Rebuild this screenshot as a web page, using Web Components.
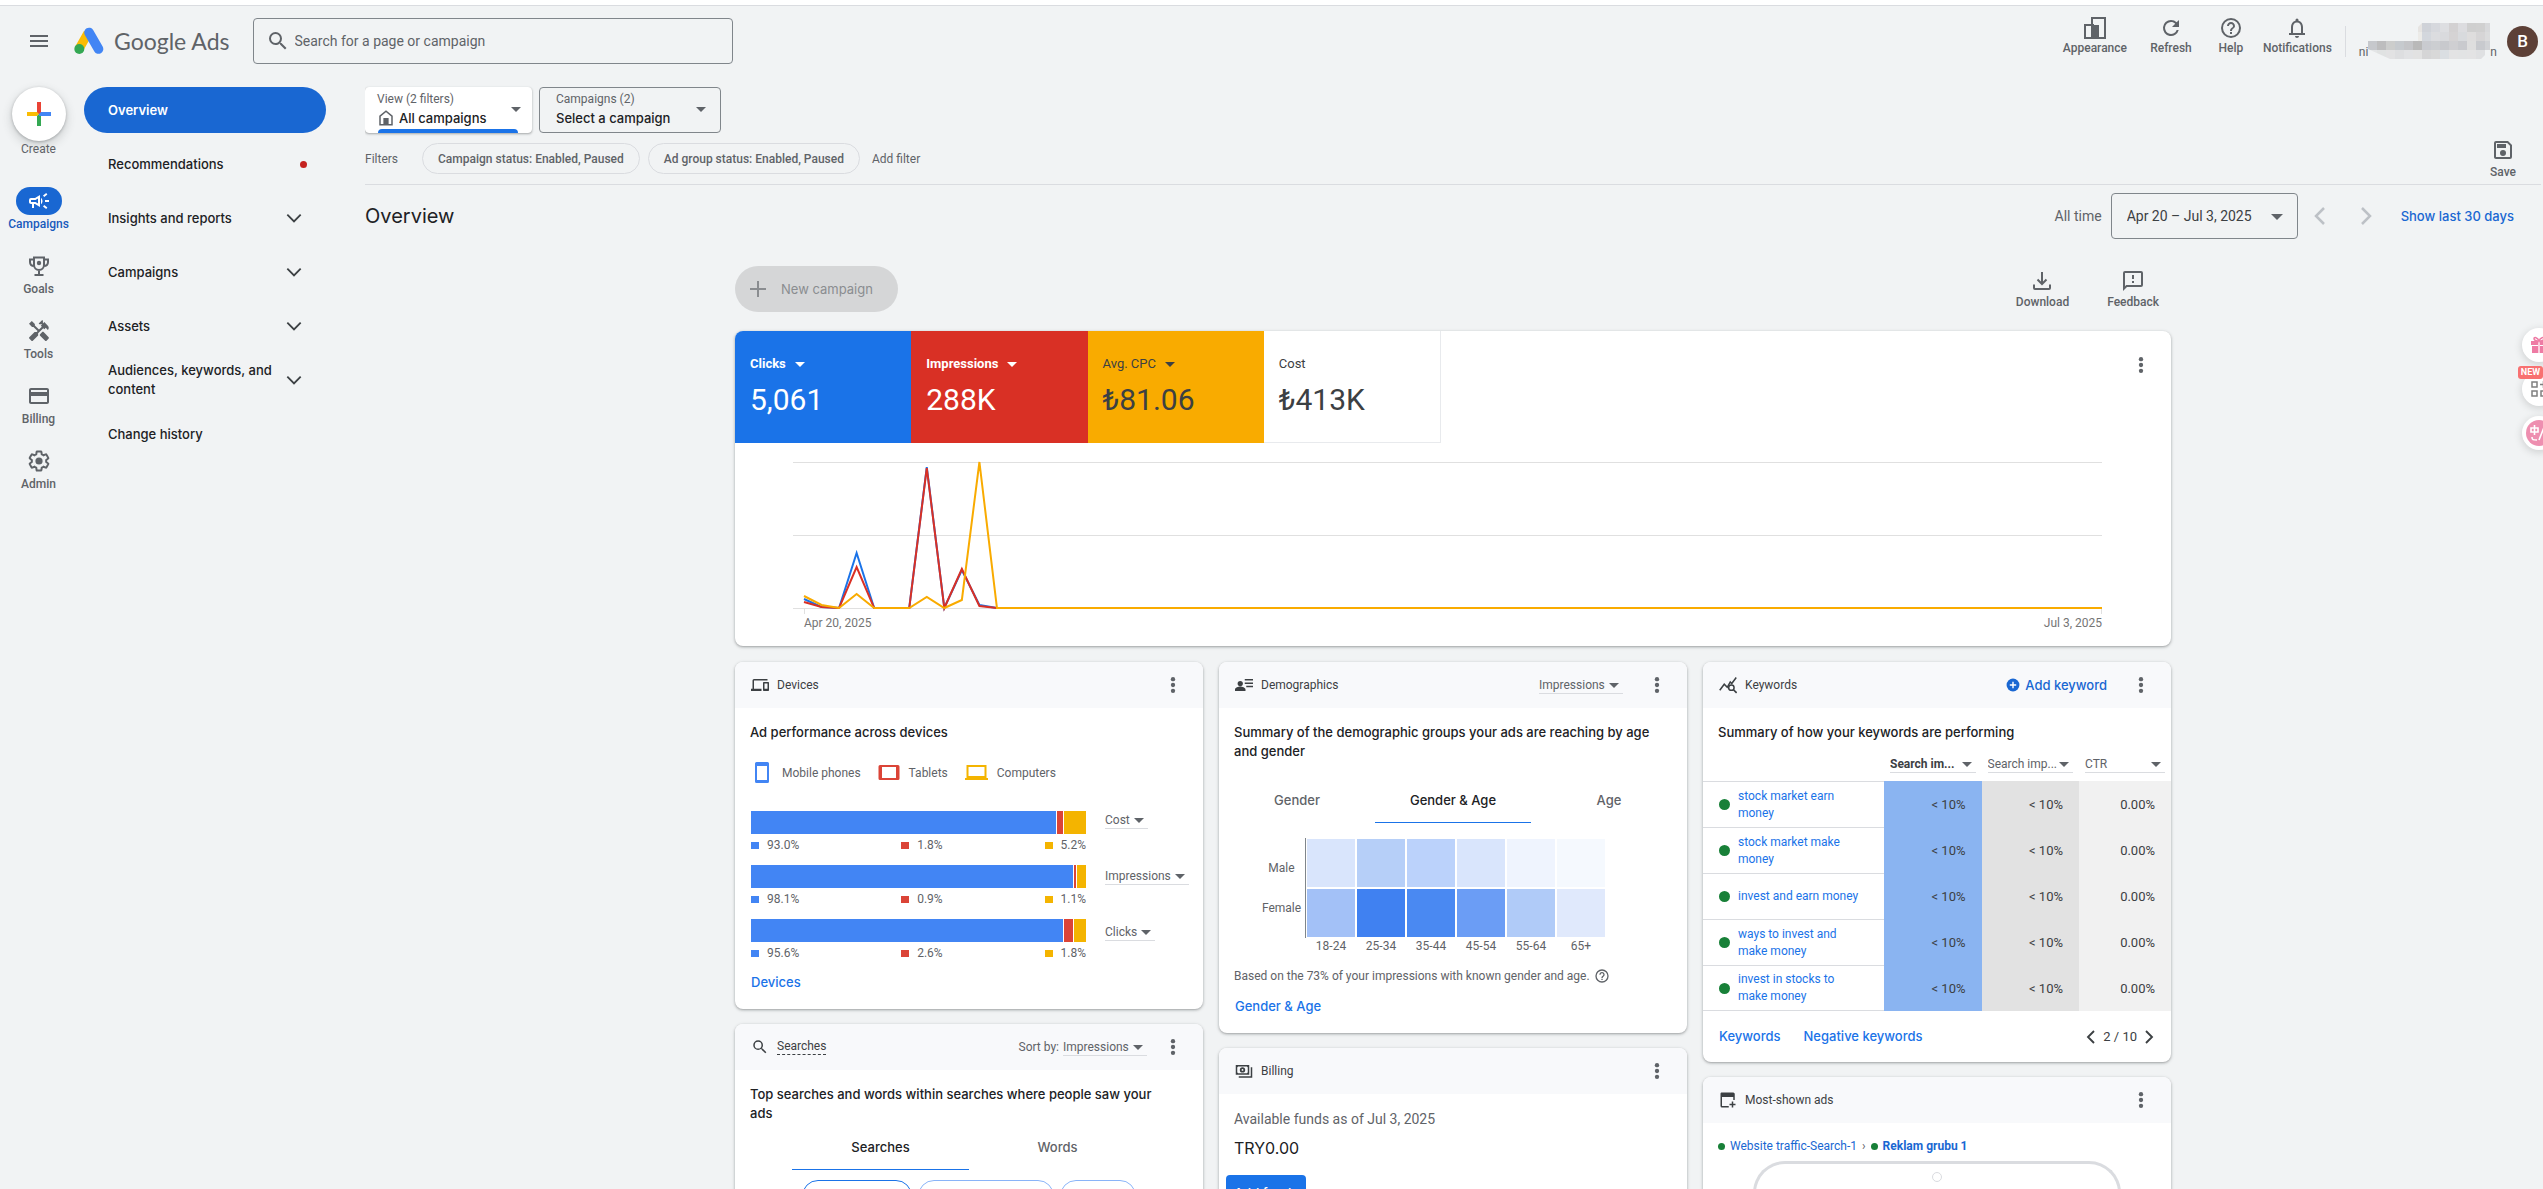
<!DOCTYPE html>
<html lang="en">
<head>
<meta charset="utf-8">
<title>Overview - Google Ads</title>
<style>
  body { margin: 0; background: #f1f3f4; }
</style>
</head>
<body>
<ads-app></ads-app>
<script>
const BASE = `
  *, *::before, *::after { box-sizing: border-box; }
  button, select, input { font: inherit; color: inherit; margin: 0; padding: 0; border: 0; background: none; letter-spacing: inherit; }
  button, select { cursor: pointer; }
  a { color: inherit; text-decoration: none; }
  p, h1, h2, ul, dl, dd { margin: 0; padding: 0; }
  [hidden] { display: none; }
`;

/* Registers an element whose shadow root is filled from css and markup. */
function define(tag, css, markup) {
  customElements.define(tag, class extends HTMLElement {
    connectedCallback() {
      if (this.shadowRoot) return;
      const html = typeof markup === 'function' ? markup(this) : markup;
      this.attachShadow({ mode: 'open' }).innerHTML = `<style>${BASE}${css}</style>${html}`;
    }
  });
}
const attr = (el, name, fallback = '') => el.getAttribute(name) ?? fallback;

const ICONS = {
  menu: '<path d="M3 18h18v-2H3zM3 13h18v-2H3zM3 6v2h18V6z"/>',
  search: '<path d="M15.5 14h-.79l-.28-.27A6.47 6.47 0 0 0 16 9.5 6.5 6.5 0 1 0 9.5 16c1.61 0 3.09-.59 4.23-1.57l.27.28v.79l5 4.99L20.49 19zm-6 0a4.5 4.5 0 1 1 0-9 4.5 4.5 0 0 1 0 9z"/>',
  campaign: '<path d="M18 11h4v2h-4zM16 17.6l3.2 2.4 1.2-1.6-3.2-2.4zM20.4 5.6L19.2 4 16 6.4 17.200 8zM15.500 12c0-1.330-.58-2.530-1.500-3.350v6.690c.92-.81 1.500-2.010 1.500-3.340z"/><path fill-rule="evenodd" d="M4 9a2 2 0 0 0-2 2v2c0 1.100.9 2 2 2h1v4h2v-4h1l5 3V6L8 9zm4.500 2L11 9.500v5L8.500 13H4v-2z"/>',
  trophy: '<path fill="none" stroke="currentColor" stroke-width="2" d="M7 3.500h10V11a5 5 0 0 1-10 0zM7 5.500H3V8c0 2.500 1.800 4 4.300 4M17 5.500h4V8c0 2.500-1.800 4-4.300 4M12 16v5M7.500 21h9"/><circle cx="12" cy="9" r="2.200"/>',
  tools: '<path d="M21.67 18.17l-5.3-5.3h-.99l-2.54 2.54v.99l5.3 5.3c.39.39 1.02.39 1.41 0l2.12-2.12c.39-.38.39-1.02 0-1.41zM17.34 10.19l1.41-1.41 2.12 2.12c1.17-1.17 1.17-3.07 0-4.24l-3.54-3.54-1.41 1.41V1.71L15.22 1l-3.54 3.54.71.71h2.83l-1.41 1.41 1.06 1.06-2.89 2.89-4.13-4.13V5.06L4.83 2.04 2 4.87 5.03 7.9h1.41l4.13 4.13-.85.85H7.6l-5.3 5.3c-.39.39-.39 1.02 0 1.41l2.12 2.12c.39.39 1.02.39 1.41 0l5.3-5.3v-2.12l5.15-5.15z"/>',
  card: '<path d="M20 4H4c-1.11 0-1.99.89-1.99 2L2 18c0 1.11.89 2 2 2h16c1.11 0 2-.89 2-2V6c0-1.11-.89-2-2-2zm0 14H4v-6h16zm0-10H4V6h16z"/>',
  gear: '<path fill="none" stroke="currentColor" stroke-width="2" d="M19.14 12.94c.04-.3.06-.61.06-.94 0-.32-.02-.64-.07-.94l2.03-1.58c.18-.14.23-.41.12-.61l-1.92-3.32c-.12-.22-.37-.29-.59-.22l-2.39.96c-.5-.38-1.03-.7-1.62-.94l-.36-2.54c-.04-.24-.24-.41-.48-.41h-3.84c-.24 0-.43.17-.47.41l-.36 2.54c-.59.24-1.13.57-1.62.94l-2.39-.96c-.22-.08-.47 0-.59.22L2.74 8.87c-.12.21-.08.47.12.61l2.03 1.58c-.05.3-.09.63-.09.94s.02.64.07.94l-2.03 1.58c-.18.14-.23.41-.12.61l1.92 3.32c.12.22.37.29.59.22l2.39-.96c.5.38 1.03.7 1.62.94l.36 2.54c.05.24.24.41.48.41h3.84c.24 0 .44-.17.47-.41l.36-2.54c.59-.24 1.13-.56 1.62-.94l2.39.96c.22.08.47 0 .59-.22l1.92-3.32c.12-.22.07-.47-.12-.61z"/><circle cx="12" cy="12" r="3.600"/>',
  appearance: '<path fill="none" stroke="currentColor" stroke-width="2" d="M2 9h8v13H2zM9 2h13v20H9z"/><path d="M9 9h7v13H9z"/>',
  refresh: '<path d="M17.65 6.35A7.960 7.960 0 0 0 12 4a8 8 0 1 0 7.730 10h-2.080A6 6 0 1 1 12 6c1.660 0 3.140.69 4.220 1.780L13 11h7V4z"/>',
  help: '<path d="M11 18h2v-2h-2zm1-16a10 10 0 1 0 0 20 10 10 0 0 0 0-20zm0 18a8 8 0 1 1 0-16 8 8 0 0 1 0 16zm0-14c-2.210 0-4 1.790-4 4h2c0-1.100.9-2 2-2s2 .9 2 2c0 2-3 1.750-3 5h2c0-2.250 3-2.500 3-5 0-2.210-1.790-4-4-4z"/>',
  bell: '<path d="M12 22c1.100 0 2-.9 2-2h-4c0 1.100.9 2 2 2zM18 17v-6c0-3.070-1.630-5.640-4.500-6.320V4a1.500 1.500 0 0 0-3 0v.68C7.640 5.360 6 7.920 6 11v6H4v2h16v-2zm-2 0H8v-6c0-2.480 1.510-4.500 4-4.500s4 2.020 4 4.500z"/>',
  save: '<path fill-rule="evenodd" d="M17 3H5a2 2 0 0 0-2 2v14c0 1.100.89 2 2 2h14a2 2 0 0 0 2-2V7zm2 16H5V5h11.170L19 7.830zM12 12a3 3 0 1 0 0 6 3 3 0 0 0 0-6z"/><path d="M6 6h9v4H6z"/>',
  feedback: '<path d="M20 2H4a2 2 0 0 0-2 2v18l4-4h14a2 2 0 0 0 2-2V4a2 2 0 0 0-2-2zm0 14H5.170L4 17.170V4h16zM11 12h2v2h-2zM11 6h2v4h-2z"/>',
  download: '<path fill="none" stroke="currentColor" stroke-width="2" d="M12 3v12M7.500 10.500L12 15l4.500-4.500M4 15.500V19a1 1 0 0 0 1 1h14a1 1 0 0 0 1-1v-3.500"/>',
  kebab: '<circle cx="12" cy="5" r="2.600"/><circle cx="12" cy="12" r="2.600"/><circle cx="12" cy="19" r="2.600"/>',
  home: '<path fill="none" stroke="currentColor" stroke-width="2" d="M4 21V9.500L12 3l8 6.500V21z"/><path d="M8.500 12h7v9h-7z"/>',
  down: '<path fill="none" stroke="currentColor" stroke-width="2.200" d="M4 8l8 8 8-8"/>',
  left: '<path fill="none" stroke="currentColor" stroke-width="2.500" d="M16 4l-8 8 8 8"/>',
  right: '<path fill="none" stroke="currentColor" stroke-width="2.500" d="M8 4l8 8-8 8"/>',
  plus: '<path d="M20 11h-7V4h-2v7H4v2h7v7h2v-7h7z"/>',
  plusCircle: '<circle cx="12" cy="12" r="11"/><path stroke="#fff" stroke-width="2.400" d="M12 6.500v11M6.500 12h11"/>',
  devices: '<path d="M4 6h18V4H4a2 2 0 0 0-2 2v11H0v3h14v-3H4zM23 8h-6a1 1 0 0 0-1 1v10a1 1 0 0 0 1 1h6a1 1 0 0 0 1-1V9a1 1 0 0 0-1-1zm-1 9h-4v-7h4z"/>',
  people: '<circle cx="7" cy="10" r="3.500"/><path d="M0 20v-2c0-2.600 4.500-4 7-4s7 1.400 7 4v2zM13 4h11v2H13zM13 8.500h11v2H13zM15 13h9v2h-9z"/>',
  insights: '<path fill="none" stroke="currentColor" stroke-width="2" d="M1 19l6-8 4 4 4-7 2 2 6-8"/><circle cx="16.500" cy="15.500" r="3.600" fill="#f8f9fb" stroke="currentColor" stroke-width="2"/><path stroke="currentColor" stroke-width="2.200" d="M19 18l4.500 4.500"/>',
  cash: '<path fill-rule="evenodd" d="M1 4h18v13H1zm3 2a2 2 0 0 1-1 1v7a2 2 0 0 1 1 1h12a2 2 0 0 1 1-1V7a2 2 0 0 1-1-1z"/><circle cx="10" cy="10.500" r="3.600"/><circle cx="10" cy="10.500" r="1.200" fill="#fff"/><path d="M21 7h2v14H5v-2h16z"/>',
  adPlus: '<path d="M3 2h16a2 2 0 0 1 2 2v8h-2V8H4v12h9v2H4a2 2 0 0 1-2-2V4a2 2 0 0 1 1-2zM17 14h2v3h3v2h-3v3h-2v-3h-3v-2h3z"/>'
};

define('ads-icon', `
  :host { display: inline-flex; flex: none; width: var(--size, 24px); height: var(--size, 24px); }
  svg { width: 100%; height: 100%; fill: currentColor; display: block; }
`, el => `<svg viewBox="0 0 24 24" aria-hidden="true">${ICONS[attr(el, 'name')]}</svg>`);

define('ads-logo', `
  :host { display: flex; align-items: center; gap: 10px; color: #5f6368; font: 23px/30px Lato, sans-serif; }
  svg { width: 30px; height: 28px; flex: none; }
`, `<svg viewBox="0 0 30 28" aria-hidden="true">
      <path d="M14 6L5 22" stroke="#fbbc04" stroke-width="9"/>
      <path d="M15 5.500L24.500 22" stroke="#4285f4" stroke-width="9.600" stroke-linecap="round"/>
      <circle cx="5.300" cy="22" r="5" fill="#34a853"/>
    </svg><span>Google Ads</span>`);

/* Icon above a small caption. */
define('ads-action', `
  :host { display: block; color: #5f6368; }
  button { display: flex; flex-direction: column; align-items: center; gap: var(--gap, 0px); width: 100%; font: 500 12px/16px Roboto, sans-serif; }
`, el => `<button type="button"><ads-icon name="${attr(el, 'icon')}"></ads-icon><span><slot></slot></span></button>`);

define('ads-kebab', `
  :host { display: block; flex: none; color: #5f6368; --size: 20px; }
  button { display: grid; place-items: center; width: 24px; height: 24px; }
`, `<button type="button" aria-label="More options"><ads-icon name="kebab"></ads-icon></button>`);

/* Inline underlined drop-down. */
define('ads-select', `
  :host { display: block; position: relative; width: var(--w, 84px); height: 18px; color: #5f6368; font: 12px/16px Roboto, sans-serif; border-bottom: 1px solid #dadce0; }
  select { appearance: none; display: block; width: 100%; height: 17px; font: inherit; }
  :host([strong]) { font-weight: 700; color: #3c4043; }
  i { position: absolute; right: 4px; top: 7px; border: 5px solid transparent; border-top-color: #5f6368; border-bottom: 0; pointer-events: none; }
`, el => `<select aria-label="${attr(el, 'label')}"><option>${attr(el, 'value')}</option></select><i></i>`);

/* Two-line scope picker. */
define('ads-scope', `
  :host { display: block; height: 46px; width: 182px; border: 1px solid #80868b; border-radius: 4px; position: relative; color: #202124; }
  :host([active]) { width: 167px; background: #fff; border-color: #fff; box-shadow: 0 1px 2px rgba(60,64,67,.3), 0 1px 3px rgba(60,64,67,.15); }
  label { display: block; padding: 3px 0 0 16px; font: 12px/17px Roboto, sans-serif; color: #5f6368; }
  div { display: flex; align-items: center; gap: 4px; padding-left: 16px; --size: 18px; }
  :host([active]) label, :host([active]) div { padding-left: 11px; }
  ads-icon { color: #5f6368; }
  select { appearance: none; flex: 1; font: 500 13px/20px Inter, sans-serif; height: 20px; }
  i { position: absolute; right: 14px; top: 19px; border: 5px solid transparent; border-top-color: #5f6368; border-bottom: 0; pointer-events: none; }
  :host([active]) i { right: 10px; }
  :host([active])::after { content: ""; position: absolute; left: 12px; right: 13px; bottom: -1px; height: 4px; background: #1a73e8; border-radius: 4px 4px 0 0; }
`, el => `<label for="s">${attr(el, 'label')}</label>
  <div>${el.hasAttribute('icon') ? `<ads-icon name="${attr(el, 'icon')}"></ads-icon>` : ''}<select id="s"><option>${attr(el, 'value')}</option></select></div><i></i>`);

define('ads-header', `
  :host { display: block; background: #f1f3f4; border-top: 5px solid #fff; }
  header { display: flex; align-items: center; height: 71px; border-top: 1px solid #dadce0; padding: 0 5px 0 27px; color: #5f6368; }
  .menu { display: flex; margin-right: 23px; }
  .search { display: flex; align-items: center; gap: 5px; margin-left: 23px; padding: 0 12px; width: 480px; height: 46px; border: 1px solid #80868b; border-radius: 4px; font: 14px/20px Roboto, sans-serif; }
  .search input { flex: 1; outline: 0; }
  .search input::placeholder { color: #5f6368; opacity: 1; }
  .actions { display: flex; gap: 16px; margin-left: auto; padding-bottom: 10px; }
  .actions ads-action { min-width: 56px; }
  .actions ads-action.narrow { min-width: 32px; }
  .rule { width: 1px; height: 31px; background: #dadce0; margin: 0 13px; }
  .account { display: flex; align-items: center; gap: 10px; }
  .mail { display: flex; align-items: flex-end; font: 12px/16px Roboto, sans-serif; height: 37px; }
  .mail svg { width: 122px; height: 37px; }
  .avatar { width: 31px; height: 31px; border-radius: 50%; background: #5d4037; color: #fff; font: 500 17px/31px Roboto, sans-serif; text-align: center; }
`, () => {
    const rows = [
      ['', '', '', '', '', '#e6e4e2', '#cfd2d8', '#d6d8dd', '#dddee1', '#d3d1d2', '#dcdcdf', '#cfcfcf', '#d0d0d0', '#d8d9db'],
      ['', '', '', '', '', '#ecebe8', '#d3d7dd', '#dbdcdf', '#d9dadd', '#d5d3d4', '#d8dadd', '#dedddd', '#d6d5d6', '#dbdcdd'],
      ['#c6c8cc', '#bdbdbe', '#cccdcc', '#c6cace', '#c4c5c8', '#b9b9b9', '#c9cbd0', '#ccced1', '#c8c9cd', '#cfcfd2', '#c9cace', '#dedede', '#c8cace', '#d1d3d6'],
      ['#e3e5e6', '#e0e2e2', '#e2e2e3', '#dddee0', '#e1e2e4', '#e2e2e2', '#d5d5d6', '#d8d8d8', '#dadee2', '#e3e3e4', '#e2e3e4', '#e3e3e4', '#dfe0e2', '']
    ];
    const cells = rows.map((r, y) => r.map((c, x) => c ? `<rect x="${x * 9}" y="${y * 9}" width="9" height="9" fill="${c}"/>` : '').join('')).join('');
    return `<header>
      <button class="menu" type="button" aria-label="Main menu"><ads-icon name="menu"></ads-icon></button>
      <ads-logo></ads-logo>
      <label class="search"><ads-icon name="search"></ads-icon><input type="text" aria-label="Search" placeholder="Search for a page or campaign"></label>
      <div class="actions">
        <ads-action icon="appearance">Appearance</ads-action>
        <ads-action icon="refresh">Refresh</ads-action>
        <ads-action class="narrow" icon="help">Help</ads-action>
        <ads-action icon="bell">Notifications</ads-action>
      </div>
      <div class="rule"></div>
      <div class="account">
        <div class="mail"><span>ni</span><svg viewBox="0 0 122 37" preserveAspectRatio="none" aria-hidden="true"><defs><clipPath id="m"><path d="M54 0h68v27l-9 9H22L0 26V18h50V4z"/></clipPath></defs><g clip-path="url(#m)">${cells}</g></svg><span>n</span></div>
        <div class="avatar">B</div>
      </div>
    </header>`;
  });

define('ads-rail-item', `
  :host { display: block; color: #5f6368; }
  button { display: flex; flex-direction: column; align-items: center; gap: 1px; width: 100%; font: 500 12px/16px Roboto, sans-serif; }
  .pill { display: grid; place-items: center; width: 46px; height: 28px; border-radius: 14px; }
  :host([active]) { color: #185abc; }
  :host([active]) .pill { background: #1967d2; color: #fff; }
`, el => `<button type="button"><span class="pill"><ads-icon name="${attr(el, 'icon')}"></ads-icon></span><span><slot></slot></span></button>`);

define('ads-rail', `
  :host { display: flex; flex-direction: column; gap: 20px; width: 77px; flex: none; padding-top: 11px; }
  .create { display: flex; flex-direction: column; align-items: center; margin-bottom: 10px; color: #5f6368; font: 12px/16px Roboto, sans-serif; }
  .disc { display: grid; place-items: center; width: 54px; height: 54px; border-radius: 50%; background: #fff; box-shadow: 0 1px 3px rgba(60,64,67,.35), 0 4px 8px 2px rgba(60,64,67,.15); }
`, `<button class="create" type="button"><span class="disc"><svg width="24" height="24" viewBox="0 0 24 24" aria-hidden="true">
      <path fill="#ea4335" d="M10 0h4v12h-4z"/><path fill="#fbbc04" d="M0 10h10l2 2-2 2H0z"/><path fill="#34a853" d="M10 14l2-2 2 2v10h-4z"/><path fill="#4285f4" d="M14 10h10v4H12v-2z"/></svg></span><span>Create</span></button>
    <ads-rail-item icon="campaign" active>Campaigns</ads-rail-item>
    <ads-rail-item icon="trophy">Goals</ads-rail-item>
    <ads-rail-item icon="tools">Tools</ads-rail-item>
    <ads-rail-item icon="card">Billing</ads-rail-item>
    <ads-rail-item icon="gear">Admin</ads-rail-item>`);

define('ads-nav-item', `
  :host { display: block; color: #202124; }
  a { display: flex; align-items: center; justify-content: space-between; height: 46px; padding: 0 22px 0 24px; border-radius: 23px; font: 500 13px/19px Inter, sans-serif; --size: 20px; }
  :host([active]) a { background: #1967d2; color: #fff; font-weight: 600; }
  span { flex: 1; }
  ads-icon { color: #3c4043; }
  i { width: 7px; height: 7px; border-radius: 50%; background: #c5221f; margin-right: -3px; }
`, el => `<a href="#"><span><slot></slot></span>${el.hasAttribute('dot') ? '<i></i>' : ''}${el.hasAttribute('more') ? '<ads-icon name="down"></ads-icon>' : ''}</a>`);

define('ads-nav', `
  :host { display: flex; flex-direction: column; gap: 8px; width: 242px; flex: none; margin-left: 7px; padding-top: 11px; }
`, `<ads-nav-item active>Overview</ads-nav-item>
    <ads-nav-item dot>Recommendations</ads-nav-item>
    <ads-nav-item more>Insights and reports</ads-nav-item>
    <ads-nav-item more>Campaigns</ads-nav-item>
    <ads-nav-item more>Assets</ads-nav-item>
    <ads-nav-item more>Audiences, keywords, and content</ads-nav-item>
    <ads-nav-item>Change history</ads-nav-item>`);

define('ads-toolbar', `
  :host { display: block; }
  .scopes { display: flex; gap: 7px; padding-top: 11px; }
  .filters { display: flex; align-items: center; height: 52px; border-bottom: 1px solid #dadce0; color: #5f6368; font: 12px/16px Roboto, sans-serif; }
  .chip { height: 31px; padding: 0 15px; border: 1px solid #dadce0; border-radius: 16px; font-weight: 500; margin-right: 8px; }
  .filters > span { width: 57px; }
  .add { margin-left: 4px; }
  .filters ads-action { margin-left: auto; margin-right: 25px; --gap: 2px; }
  .title { display: flex; align-items: center; height: 62px; padding-right: 27px; font: 14px/18px Roboto, sans-serif; color: #5f6368; }
  h1 { font: 400 20px/28px Inter, sans-serif; color: #202124; margin-right: auto; }
  .date { position: relative; width: 187px; height: 46px; margin-left: 9px; border: 1px solid #80868b; border-radius: 4px; color: #3c4043; }
  .date select { appearance: none; width: 100%; height: 100%; padding-left: 15px; }
  .date i { position: absolute; right: 14px; top: 20px; border: 6px solid transparent; border-top-color: #5f6368; border-bottom: 0; pointer-events: none; }
  .title button { display: flex; margin-left: 10px; color: #bdc1c6; --size: 24px; }
  .title button + button { margin-left: 22px; }
  .title a { margin-left: 23px; color: #1967d2; font: 500 13px/18px Inter, sans-serif; }
`, `<div class="scopes">
      <ads-scope active icon="home" label="View (2 filters)" value="All campaigns"></ads-scope>
      <ads-scope label="Campaigns (2)" value="Select a campaign"></ads-scope>
    </div>
    <div class="filters"><span>Filters</span>
      <button class="chip" type="button">Campaign status: Enabled, Paused</button>
      <button class="chip" type="button">Ad group status: Enabled, Paused</button>
      <button class="add" type="button">Add filter</button>
      <ads-action icon="save">Save</ads-action>
    </div>
    <div class="title"><h1>Overview</h1><label for="d">All time</label>
      <div class="date"><select id="d"><option>Apr 20 – Jul 3, 2025</option></select><i></i></div>
      <button type="button" aria-label="Previous period"><ads-icon name="left"></ads-icon></button>
      <button type="button" aria-label="Next period"><ads-icon name="right"></ads-icon></button>
      <a href="#">Show last 30 days</a>
    </div>`);

define('ads-metric', `
  :host { display: block; flex: 1; height: 112px; padding: 24px 15px; color: #3c4043; background: var(--bg, #fff); }
  :host([light]) { color: #fff; }
  :host([plain]) { border: 1px solid #e8eaed; border-width: 0 1px 1px 0; }
  button { display: flex; align-items: center; gap: 9px; font: 13px/18px Roboto, sans-serif; }
  :host([light]) button { font-weight: 700; }
  i { border: 5px solid transparent; border-top-color: currentColor; border-bottom: 0; }
  p { font: 30px/36px Roboto, sans-serif; margin-top: 9px; }
`, el => `<button type="button">${attr(el, 'label')}${el.hasAttribute('plain') ? '' : '<i></i>'}</button><p><slot></slot></p>`);

define('ads-chart', `
  :host { display: block; padding: 18px 69px 15px 58px; }
  svg { display: block; width: 100%; height: 153px; overflow: visible; }
  path { fill: none; vector-effect: non-scaling-stroke; }
  div { display: flex; justify-content: space-between; margin-top: 1px; padding-left: 11px; font: 12px/16px Roboto, sans-serif; color: #757575; }
`, () => {
    const days = 75, left = 11, step = 1298 / 74;
    const line = (color, values) => {
      const points = Array.from({ length: days }, (_, i) => `${(left + i * step).toFixed(2)} ${147 - (values[i] ?? 0)}`);
      return `<path stroke="${color}" stroke-width="2" d="M${points.join('L')}"/>`;
    };
    return `<svg viewBox="0 0 1309 153" preserveAspectRatio="none" role="img" aria-label="Clicks, impressions and average CPC over time">
      <path stroke="#e0e0e0" d="M0 1.500H1309M0 74.500H1309M0 147.500H1309M11.500 147v6M1308.500 147v6"/>
      ${line('#1a73e8', [9, 1, 0, 55, 0, 0, 0, 141, 0, 38, 3, 0])}
      ${line('#d93025', [6, 1, 0, 41, 0, 0, 0, 140, 0, 39, 2, 0])}
      ${line('#f9ab00', [12, 3, 0, 14, 0, 0, 0, 11, 0, 8, 146, 0])}
    </svg><div><span>Apr 20, 2025</span><span>Jul 3, 2025</span></div>`;
  });

define('ads-summary', `
  :host { display: block; background: #fff; border-radius: 8px; overflow: hidden; box-shadow: 0 1px 2px rgba(60,64,67,.3), 0 1px 3px 1px rgba(60,64,67,.15); }
  .top { display: flex; justify-content: space-between; padding-right: 18px; }
  .tiles { display: flex; width: 706px; }
  ads-kebab { margin-top: 22px; }
`, `<div class="top"><div class="tiles">
      <ads-metric light label="Clicks" style="--bg:#1a73e8">5,061</ads-metric>
      <ads-metric light label="Impressions" style="--bg:#d93025">288K</ads-metric>
      <ads-metric label="Avg. CPC" style="--bg:#f9ab00">₺81.06</ads-metric>
      <ads-metric plain label="Cost">₺413K</ads-metric>
    </div><ads-kebab></ads-kebab></div><ads-chart></ads-chart>`);

/* White panel with a tinted title bar; "actions" slot sits before the menu. */
define('ads-card', `
  :host { display: block; background: #fff; border-radius: 8px; overflow: hidden; box-shadow: 0 1px 2px rgba(60,64,67,.3), 0 1px 3px 1px rgba(60,64,67,.15); }
  header { display: flex; align-items: center; height: 46px; padding: 0 18px 0 16px; background: #f8f9fb; color: #3c4043; --size: 18px; }
  h2 { font: 400 12px/18px Roboto, sans-serif; margin: 0 auto 0 8px; }
  :host([dashed]) h2 { border-bottom: 1px dashed #3c4043; line-height: 15px; }
  .actions { display: flex; align-items: center; margin-right: var(--action-gap, 22px); }
  .lead { font: 500 13px/19px Inter, sans-serif; color: #202124; padding: 15px 31px 1px 15px; }
`, el => `<header><ads-icon name="${attr(el, 'icon')}"></ads-icon><h2>${attr(el, 'heading')}</h2>
    <div class="actions"><slot name="actions"></slot></div><ads-kebab></ads-kebab></header>
    ${el.hasAttribute('lead') ? `<p class="lead">${attr(el, 'lead')}</p>` : ''}<slot></slot>`);

define('ads-link', `
  :host { display: block; font: 500 13px/19px Inter, sans-serif; color: #1a73e8; }
`, `<a href="#"><slot></slot></a>`);

/* Stacked bar: "values" are the captions, "weights" the drawn lengths. */
define('ads-share-bar', `
  :host { display: block; }
  .bar { display: flex; gap: 1px; height: 23px; }
  .legend { display: flex; justify-content: space-between; margin-top: 3px; font: 12px/16px Roboto, sans-serif; color: #5f6368; }
  .legend span { display: flex; align-items: center; gap: 8px; }
  .legend i { width: 8px; height: 7px; }
`, el => {
    const colors = ['#4285f4', '#db4437', '#f4b400'];
    const values = attr(el, 'values').split(' ');
    const weights = attr(el, 'weights').split(' ');
    return `<div class="bar">${weights.map((w, i) => `<div style="flex:${w} 1 0;background:${colors[i]}"></div>`).join('')}</div>
      <div class="legend">${values.map((v, i) => `<span><i style="background:${colors[i]}"></i>${v}%</span>`).join('')}</div>`;
  });

define('ads-devices', `
  :host { display: block; padding: 0 16px 17px; }
  .legend { display: flex; align-items: center; height: 24px; margin-top: 18px; font: 12px/16px Roboto, sans-serif; color: #5f6368; }
  .legend span { display: flex; align-items: center; gap: 9px; margin-right: 17px; }
  .rows { display: flex; gap: 19px; margin-top: 26px; }
  .bars { display: flex; flex-direction: column; gap: 12px; flex: 1; }
  .picks { display: flex; flex-direction: column; gap: 38px; width: 82px; }
  ads-link { margin-top: 12px; }
`, `<div class="legend">
      <span><svg width="22" height="22" viewBox="0 0 22 22" aria-hidden="true"><path fill="#4285f4" fill-rule="evenodd" d="M5.500 0h11A1.500 1.500 0 0 1 18 1.500v18a1.500 1.500 0 0 1-1.500 1.500h-11A1.500 1.500 0 0 1 4 19.500v-18A1.500 1.500 0 0 1 5.500 0zM6 4v14h10V4z"/></svg>Mobile phones</span>
      <span><svg width="22" height="16" viewBox="0 0 22 16" aria-hidden="true"><path fill="#db4437" fill-rule="evenodd" d="M2 0h18a1.500 1.500 0 0 1 1.500 1.500v12A1.500 1.500 0 0 1 20 15H2a1.500 1.500 0 0 1-1.500-1.500v-12A1.500 1.500 0 0 1 2 0zM4 2v11h14V2z"/></svg>Tablets</span>
      <span><svg width="23" height="16" viewBox="0 0 23 16" aria-hidden="true"><path fill="none" stroke="#f4b400" stroke-width="2" d="M2.500 1h18v11h-18z"/><path fill="#f4b400" d="M0 13h23v2H0z"/></svg>Computers</span>
    </div>
    <div class="rows"><div class="bars">
      <ads-share-bar values="93.0 1.8 5.2" weights="305 6 22"></ads-share-bar>
      <ads-share-bar values="98.1 0.9 1.1" weights="322 2 9"></ads-share-bar>
      <ads-share-bar values="95.6 2.6 1.8" weights="312 9 12"></ads-share-bar>
    </div><div class="picks">
      <ads-select label="First metric" value="Cost" style="--w:43px"></ads-select>
      <ads-select label="Second metric" value="Impressions"></ads-select>
      <ads-select label="Third metric" value="Clicks" style="--w:50px"></ads-select>
    </div></div>
    <ads-link>Devices</ads-link>`);

define('ads-tabs', `
  :host { display: flex; color: #5f6368; font: 500 13px/18px Inter, sans-serif; }
  button { flex: 1; height: 46px; border-bottom: 1px solid transparent; }
  [aria-selected=true] { color: #202124; border-color: #1a73e8; }
`, el => attr(el, 'items').split('|').map((t, i) =>
    `<button type="button" role="tab" aria-selected="${i === +attr(el, 'selected', 0)}">${t}</button>`).join(''));

define('ads-heatmap', `
  :host { display: flex; padding: 15px 0 0 42px; font: 12px/16px Roboto, sans-serif; color: #5f6368; }
  .sex { display: flex; flex-direction: column; justify-content: center; gap: 24px; width: 41px; height: 100px; margin-right: 3px; text-align: center; }
  .grid { display: grid; grid-template-columns: repeat(6, 48px); grid-auto-rows: 48px; gap: 2px; padding: 1px; border-left: 1px solid #80868b; height: 100px; }
  .ages { display: grid; grid-template-columns: repeat(6, 48px); gap: 2px; padding-left: 2px; text-align: center; }
`, () => {
    const cells = ['#d9e5fc', '#b6cff8', '#bbd2fb', '#d9e5fc', '#eff4fe', '#f5f9fe', '#a3c1f7', '#4081f1', '#4a89f2', '#6b9df5', '#b0cbf8', '#e0e9fc'];
    const ages = ['18-24', '25-34', '35-44', '45-54', '55-64', '65+'];
    return `<div class="sex"><span>Male</span><span>Female</span></div>
      <div><div class="grid">${cells.map(c => `<div style="background:${c}"></div>`).join('')}</div>
      <div class="ages">${ages.map(a => `<span>${a}</span>`).join('')}</div></div>`;
  });

define('ads-demographics', `
  :host { display: block; padding-bottom: 17px; }
  ads-tabs { margin-top: 15px; }
  p { display: flex; align-items: center; gap: 4px; padding: 13px 15px 0; font: 12px/18px Roboto, sans-serif; color: #5f6368; --size: 16px; }
  ads-link { margin: 12px 16px 0; }
`, `<ads-tabs items="Gender|Gender &amp; Age|Age" selected="1"></ads-tabs>
    <ads-heatmap></ads-heatmap>
    <p>Based on the 73% of your impressions with known gender and age. <ads-icon name="help"></ads-icon></p>
    <ads-link>Gender &amp; Age</ads-link>`);

define('ads-keywords', `
  :host { display: block; color: #3c4043; }
  table { width: 100%; table-layout: fixed; border-collapse: separate; border-spacing: 0; font: 12px/17px Roboto, sans-serif; }
  th { font-weight: 400; text-align: left; padding: 12px 6px 8px; }
  th:first-child { width: 181px; }
  th:last-child { width: 92px; }
  ads-select { --w: 100%; }
  td { height: 46px; padding: 0 16px; text-align: right; font-size: 13px; }
  td:first-child { text-align: left; padding-right: 20px; border-top: 1px solid #dadce0; color: #1a73e8; }
  tr:last-child td:first-child { border-bottom: 1px solid #dadce0; }
  td:nth-child(2) { background: #8ab4f1; }
  td:nth-child(3) { background: #e2e2e2; }
  td:nth-child(4) { background: #f1f1f1; }
  td div { display: flex; align-items: center; gap: 8px; font-size: 12px; }
  i { flex: none; width: 11px; height: 11px; border-radius: 50%; background: #188038; }
  footer { display: flex; align-items: center; gap: 23px; height: 51px; padding: 0 13px 0 16px; }
  nav { display: flex; align-items: center; gap: 3px; margin-left: auto; font: 13px/18px Roboto, sans-serif; --size: 18px; }
  nav button { display: flex; }
`, () => {
    const words = ['stock market earn money', 'stock market make money', 'invest and earn money', 'ways to invest and make money', 'invest in stocks to make money'];
    return `<table><thead><tr><th></th>
      <th><ads-select strong label="First column" value="Search im..."></ads-select></th>
      <th><ads-select label="Second column" value="Search imp..."></ads-select></th>
      <th><ads-select label="Third column" value="CTR"></ads-select></th></tr></thead>
      <tbody>${words.map(w => `<tr><td><div><i></i><a href="#">${w}</a></div></td><td>&lt; 10%</td><td>&lt; 10%</td><td>0.00%</td></tr>`).join('')}</tbody></table>
      <footer><ads-link>Keywords</ads-link><ads-link>Negative keywords</ads-link>
      <nav><button type="button" aria-label="Previous page"><ads-icon name="left"></ads-icon></button><span>2 / 10</span><button type="button" aria-label="Next page"><ads-icon name="right"></ads-icon></button></nav></footer>`;
  });

define('ads-searches', `
  :host { display: block; padding: 0 57px 40px; }
  div { display: flex; gap: 6px; margin: 10px 10px 0; }
  button { height: 32px; border: 1px solid #8ab4f8; border-radius: 16px; width: 136px; }
  button:first-child { width: 110px; border-color: #1a73e8; }
  button:last-child { width: 76px; }
`, `<ads-tabs items="Searches|Words"></ads-tabs>
    <div><button type="button" aria-label="Search term 1"></button><button type="button" aria-label="Search term 2"></button><button type="button" aria-label="Search term 3"></button></div>`);

define('ads-billing', `
  :host { display: block; padding: 16px 15px 24px; color: #5f6368; font: 14px/19px Roboto, sans-serif; }
  strong { display: block; font: 400 16px/24px Inter, sans-serif; color: #202124; margin-top: 7px; }
  button { height: 36px; margin: 15px 0 0 -8px; padding: 0 8px; border-radius: 4px; background: #1a73e8; color: #fff; font: 500 13px/20px Inter, sans-serif; }
`, `<p>Available funds as of Jul 3, 2025</p><strong>TRY0.00</strong><button type="button">Add funds</button>`);

define('ads-top-ads', `
  :host { display: block; }
  p { display: flex; align-items: center; gap: 5px; padding: 15px 15px 0; color: #1967d2; font: 12px/16px Roboto, sans-serif; }
  i { width: 7px; height: 7px; border-radius: 50%; background: #188038; }
  b { color: #5f6368; font-weight: 400; }
  a + b + i + a { font-weight: 700; }
  div { margin: 7px 50px 0; height: 90px; border: 3px solid #dadce0; border-bottom: 0; border-radius: 32px 32px 0 0; padding-top: 8px; }
  div::before { content: ""; display: block; width: 10px; height: 10px; margin: 0 auto; border: 1px solid #dadce0; border-radius: 50%; }
`, `<p><i></i><a href="#">Website traffic-Search-1</a><b>›</b><i></i><a href="#">Reklam grubu 1</a></p><div></div>`);

define('ads-overview', `
  :host { display: block; width: 1436px; max-width: 100%; margin: 0 auto; padding: 19px 0 40px; }
  .bar { display: flex; align-items: center; height: 46px; margin-bottom: 19px; padding-right: 12px; --gap: 1px; }
  .new { display: flex; align-items: center; gap: 11px; height: 46px; margin-right: auto; padding: 0 25px 0 11px; border-radius: 23px; background: #d5d6d7; color: #8a8d90; font: 13px/20px Inter, sans-serif; }
  ads-action + ads-action { margin-left: 38px; }
  .cards { display: grid; grid-template-columns: repeat(3, minmax(0, 1fr)); gap: 16px; margin-top: 16px; }
  .cards > div { display: flex; flex-direction: column; gap: 15px; }
  .sort { margin-right: 4px; font: 12px/18px Roboto, sans-serif; color: #5f6368; }
  .add { display: flex; align-items: center; gap: 5px; color: #1967d2; font: 500 13px/19px Inter, sans-serif; --size: 14px; }
`, `<div class="bar"><button class="new" type="button" disabled><ads-icon name="plus"></ads-icon>New campaign</button>
      <ads-action icon="download">Download</ads-action><ads-action icon="feedback">Feedback</ads-action></div>
    <ads-summary></ads-summary>
    <div class="cards">
      <div>
        <ads-card icon="devices" heading="Devices" lead="Ad performance across devices"><ads-devices></ads-devices></ads-card>
        <ads-card dashed icon="search" heading="Searches" lead="Top searches and words within searches where people saw your ads" style="--action-gap:14px">
          <span slot="actions" class="sort">Sort by:</span><ads-select slot="actions" label="Sort by" value="Impressions"></ads-select>
          <ads-searches></ads-searches></ads-card>
      </div>
      <div>
        <ads-card icon="people" heading="Demographics" lead="Summary of the demographic groups your ads are reaching by age and gender">
          <ads-select slot="actions" label="Metric" value="Impressions"></ads-select><ads-demographics></ads-demographics></ads-card>
        <ads-card icon="cash" heading="Billing"><ads-billing></ads-billing></ads-card>
      </div>
      <div>
        <ads-card icon="insights" heading="Keywords" lead="Summary of how your keywords are performing">
          <button slot="actions" class="add" type="button"><ads-icon name="plusCircle"></ads-icon>Add keyword</button><ads-keywords></ads-keywords></ads-card>
        <ads-card icon="adPlus" heading="Most-shown ads"><ads-top-ads></ads-top-ads></ads-card>
      </div>
    </div>`);

/* Browser-extension buttons docked to the window's right edge. */
define('ads-dock', `
  :host { position: fixed; right: -13px; top: 328px; display: flex; flex-direction: column; gap: 10px; z-index: 5; }
  button { display: grid; place-items: center; width: 34px; height: 34px; border-radius: 50%; background: #fff; box-shadow: 0 2px 8px rgba(0,0,0,.16); position: relative; }
  b { position: absolute; left: -4px; top: -6px; width: 25px; height: 13px; border-radius: 3px; background: #f87171; color: #fff; font: 700 9px/13px Roboto, sans-serif; text-align: center; }
`, `<button type="button" aria-label="Gifts"><svg width="16" height="18" viewBox="0 0 16 18"><path fill="#ee7ba4" d="M0 5h16v4H0zM1 10h14v7H1z"/><path fill="#fbd0de" d="M7 5h2v12H7z"/><path fill="none" stroke="#ee7ba4" stroke-width="1.500" d="M8 5C5 5 3 4 3 2.500S6.500 1 8 5c1.500-4 5-4 5-2.500S11 5 8 5"/></svg></button>
    <button type="button" aria-label="Apps"><svg width="16" height="16" viewBox="0 0 16 16" fill="none" stroke="#808080" stroke-width="1.500"><path d="M1 1h5v5H1zM1 10h5v5H1zM10 10h5v5h-5zM12.500 0v7M9 3.500h7"/></svg><b>NEW</b></button>
    <button type="button" aria-label="Translate"><svg width="26" height="26" viewBox="0 0 26 26"><circle cx="13" cy="13" r="13" fill="#ee8fb0"/><path fill="none" stroke="#fff" stroke-width="1.600" d="M5 8h7v4H5zM8.500 5v10M6 17c0 3 1 3 5 3M13 20l4-10 4 10"/></svg></button>`);

define('ads-app', `
  :host { display: flex; flex-direction: column; height: 100vh; overflow: hidden; }
  .body { display: flex; flex: 1; min-height: 0; }
  main { flex: 1; min-width: 0; margin: 0 2px 0 39px; overflow-y: auto; scrollbar-width: none; }
`, `<ads-header></ads-header>
    <div class="body"><ads-rail></ads-rail><ads-nav></ads-nav>
      <main><ads-toolbar></ads-toolbar><ads-overview></ads-overview></main></div>
    <ads-dock></ads-dock>`);
</script>
</body>
</html>
